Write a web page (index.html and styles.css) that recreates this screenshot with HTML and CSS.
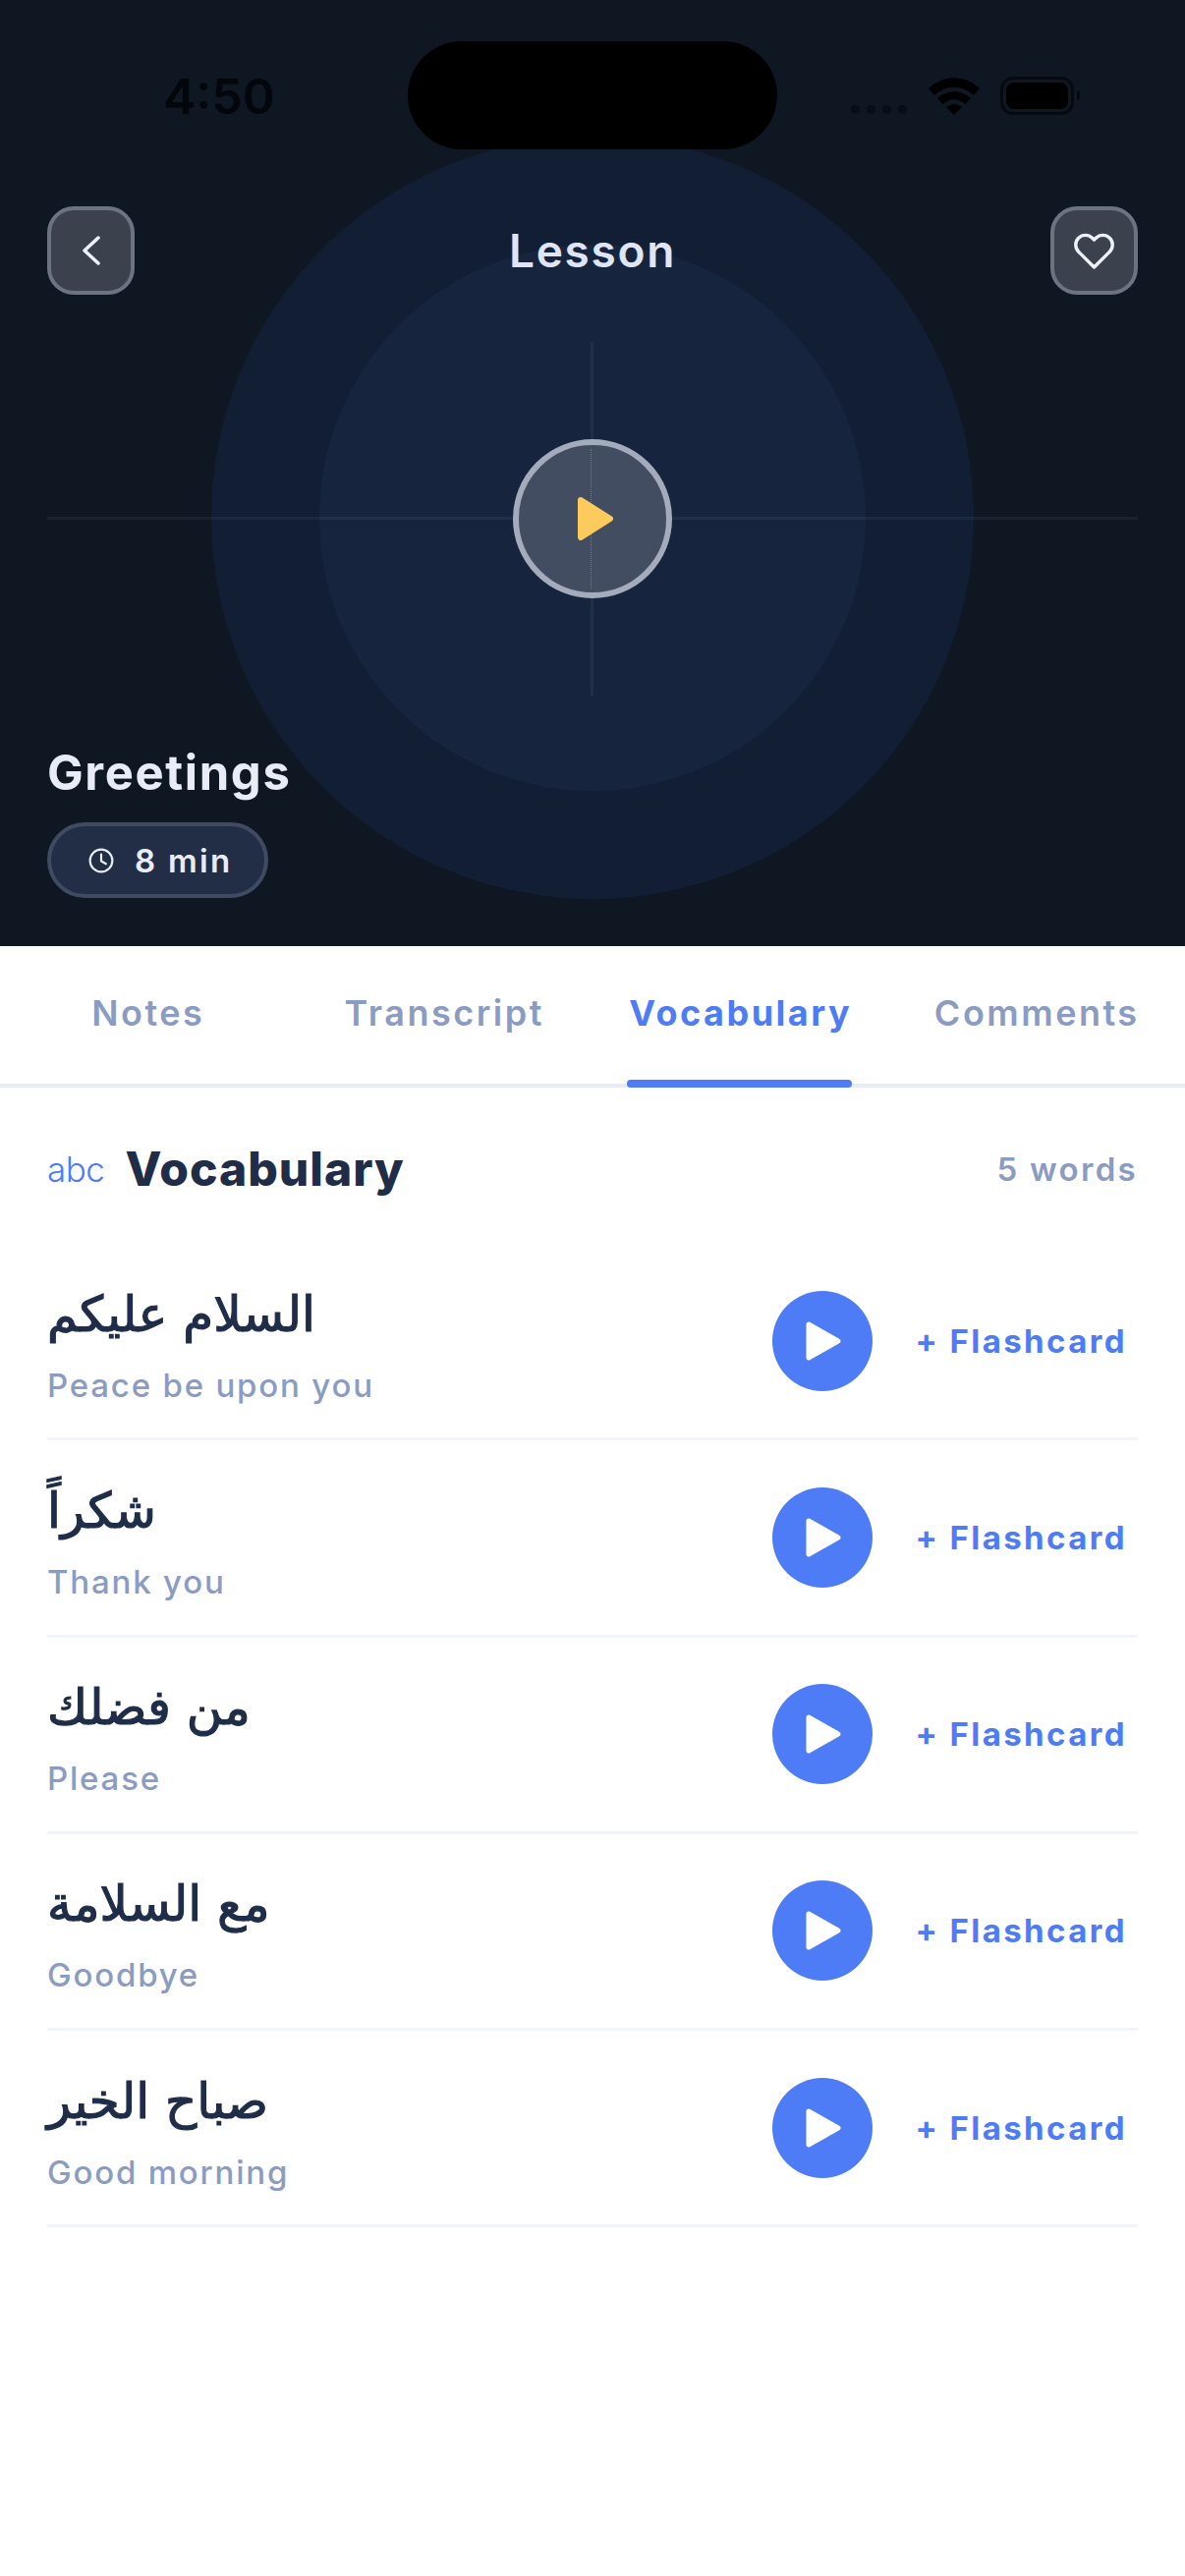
FILE: index.html
```html
<!DOCTYPE html>
<html lang="en">
<head>
<meta charset="utf-8">
<title>Lesson</title>
<link rel="stylesheet" href="styles.css">
</head>
<body>
<div class="app">
  <section class="hero">
    <div class="ring ring-outer"></div>
    <div class="ring ring-inner"></div>
    <div class="axis axis-h"></div>
    <div class="axis axis-v"></div>
    <div class="big-play">
      <svg class="big-play-icon" viewBox="0 0 36 44"><path d="M3 3 L33 22 L3 41 Z"/></svg>
    </div>
    <div class="island"></div>

    <div class="status">
      <span class="time">4:50</span>
      <div class="status-right">
        <div class="dots"><i></i><i></i><i></i><i></i></div>
        <svg class="wifi" viewBox="0 0 52 38"><path d="M0 11 C15 -3.500 37 -3.500 52 11 L46 18 C34 7 18 7 6 18 Z"/><path d="M9 21 C19 12 33 12 43 21 L37.500 27 C30 20.500 22 20.500 14.500 27 Z"/><path d="M18 30 C23 26 29 26 34 30 L26 38 Z"/></svg>
        <div class="battery"><div class="battery-fill"></div></div>
        <div class="battery-nub"></div>
      </div>
    </div>

    <header class="nav">
      <button class="nav-btn">
        <svg class="chev" viewBox="0 0 20 30"><path d="M17 2 L3 15 L17 28"/></svg>
      </button>
      <h1 class="nav-title">Lesson</h1>
      <button class="nav-btn">
        <svg class="heart" viewBox="0 0 24 24"><path d="M20.840 4.610a5.500 5.500 0 0 0-7.780 0L12 5.670l-1.060-1.060a5.500 5.500 0 0 0-7.780 7.780l1.060 1.060L12 21.230l7.780-7.780 1.060-1.060a5.500 5.500 0 0 0 0-7.780z"/></svg>
      </button>
    </header>

    <div class="hero-info">
      <h2 class="lesson-name">Greetings</h2>
      <div class="pill">
        <svg class="clock" viewBox="0 0 24 24"><circle cx="12" cy="12" r="10.500"/><path d="M12 6v6.500l4.500 2.500"/></svg>
        <span>8 min</span>
      </div>
    </div>
  </section>

  <nav class="tabs">
    <div class="tab"><span class="tab-label">Notes</span></div>
    <div class="tab"><span class="tab-label">Transcript</span></div>
    <div class="tab tab-active"><span class="tab-label">Vocabulary</span></div>
    <div class="tab"><span class="tab-label">Comments</span></div>
  </nav>

  <main class="content">
    <div class="section-head">
      <span class="abc">abc</span>
      <h3 class="section-title">Vocabulary</h3>
      <span class="count">5 words</span>
    </div>

    <div class="row">
      <div class="word"><div class="ar" dir="rtl">السلام عليكم</div><div class="en">Peace be upon you</div></div>
      <button class="say"><svg viewBox="0 0 36 40"><path d="M3 3 L33 20 L3 37 Z"/></svg></button>
      <span class="flash">+ Flashcard</span>
    </div>
    <div class="row">
      <div class="word"><div class="ar" dir="rtl">شكراً</div><div class="en">Thank you</div></div>
      <button class="say"><svg viewBox="0 0 36 40"><path d="M3 3 L33 20 L3 37 Z"/></svg></button>
      <span class="flash">+ Flashcard</span>
    </div>
    <div class="row">
      <div class="word"><div class="ar" dir="rtl">من فضلك</div><div class="en">Please</div></div>
      <button class="say"><svg viewBox="0 0 36 40"><path d="M3 3 L33 20 L3 37 Z"/></svg></button>
      <span class="flash">+ Flashcard</span>
    </div>
    <div class="row">
      <div class="word"><div class="ar" dir="rtl">مع السلامة</div><div class="en">Goodbye</div></div>
      <button class="say"><svg viewBox="0 0 36 40"><path d="M3 3 L33 20 L3 37 Z"/></svg></button>
      <span class="flash">+ Flashcard</span>
    </div>
    <div class="row">
      <div class="word"><div class="ar" dir="rtl">صباح الخير</div><div class="en">Good morning</div></div>
      <button class="say"><svg viewBox="0 0 36 40"><path d="M3 3 L33 20 L3 37 Z"/></svg></button>
      <span class="flash">+ Flashcard</span>
    </div>
  </main>
</div>
</body>
</html>
```
FILE: styles.css
```css
* { box-sizing: border-box; }
html, body { margin: 0; padding: 0; background: #fff; }
body { font-family: Inter, "DejaVu Sans", sans-serif; }
.app { width: 1206px; height: 2622px; overflow: hidden; background: #fff; }

.hero {
  position: relative;
  height: 963px;
  background: #0f1723;
  overflow: hidden;
  padding: 0 48px 49px;
  display: flex;
  flex-direction: column;
}
.ring { position: absolute; border-radius: 50%; left: 50%; top: 527px; transform: translate(-50%, -50%); }
.ring-outer { width: 776px; height: 776px; background: #121e34; }
.ring-inner { width: 556px; height: 556px; background: #16243e; }
.axis { position: absolute; background: rgba(255, 255, 255, 0.05); }
.axis-h { left: 48px; right: 48px; top: 526px; height: 3px; }
.axis-v { left: 601px; top: 348px; width: 3px; height: 360px; }
.big-play {
  position: absolute;
  left: 522px;
  top: 447px;
  width: 162px;
  height: 162px;
  border-radius: 50%;
  border: 6px solid #a3abbd;
  background: #434d62;
  display: flex;
  align-items: center;
  justify-content: center;
}
.big-play::before {
  content: "";
  position: absolute;
  left: 73px;
  top: 4px;
  bottom: 4px;
  border-left: 1px dotted #6d768a;
}
.big-play-icon { position: relative; width: 36px; height: 44px; margin-left: 6px; }
.big-play-icon path { fill: #fdcb5c; stroke: #fdcb5c; stroke-width: 6; stroke-linejoin: round; }
.island {
  position: absolute;
  left: 415px;
  top: 42px;
  width: 376px;
  height: 110px;
  border-radius: 55px;
  background: #000;
}

.status {
  position: relative;
  height: 210px;
  padding: 67px 59px 0 118px;
  display: flex;
  justify-content: space-between;
  align-items: flex-start;
}
.time { font-size: 50px; line-height: 62px; font-weight: 600; color: #03060a; }
.status-right { display: flex; align-items: flex-start; padding-top: 11px; }
.dots { display: flex; gap: 7px; margin-top: 29px; margin-right: 22px; }
.dots i { display: block; width: 9px; height: 9px; border-radius: 50%; background: #080e16; }
.wifi { width: 52px; height: 38px; fill: #000; margin-top: 1px; margin-right: 21px; }
.battery {
  width: 75px;
  height: 39px;
  border: 3px solid #060a10;
  border-radius: 13px;
  padding: 3px;
}
.battery-fill { width: 100%; height: 100%; background: #000; border-radius: 8px; }
.battery-nub { width: 3px; height: 10px; margin: 14px 0 0 3px; background: #060a10; border-radius: 0 3px 3px 0; }

.nav {
  position: relative;
  display: flex;
  align-items: center;
  justify-content: space-between;
  height: 90px;
}
.nav-btn {
  width: 89px;
  height: 90px;
  padding: 0;
  border: 4px solid #6c7482;
  border-radius: 27px;
  background: #3b424e;
  display: flex;
  align-items: center;
  justify-content: center;
}
.chev { width: 20px; height: 30px; fill: none; stroke: #eef1f9; stroke-width: 3.500; stroke-linecap: round; stroke-linejoin: round; }
.heart { width: 43px; height: 43px; fill: none; stroke: #eef1f9; stroke-width: 1.900; stroke-linecap: round; stroke-linejoin: round; }
.nav-title {
  margin: 0;
  font-size: 46px;
  line-height: 54px;
  font-weight: 600;
  letter-spacing: 1.700px;
  color: #dfe5f5;
}

.hero-info { position: relative; margin-top: auto; }
.lesson-name {
  margin: 0 0 21px;
  font-size: 49px;
  line-height: 58px;
  font-weight: 700;
  letter-spacing: 1.600px;
  color: #e8ecf7;
}
.pill {
  display: inline-flex;
  align-items: center;
  height: 77px;
  padding: 0 33px 0 38px;
  gap: 21px;
  border: 4px solid #3f4b63;
  border-radius: 39px;
  background: #222e45;
  font-size: 33px;
  font-weight: 600;
  letter-spacing: 2.300px;
  color: #e8ecf7;
}
.clock { width: 26px; height: 26px; fill: none; stroke: #e8ecf7; stroke-width: 2; stroke-linecap: round; stroke-linejoin: round; }

.tabs {
  display: grid;
  grid-template-columns: repeat(4, 1fr);
  height: 144px;
  border-bottom: 4px solid #e8ecf7;
}
.tab { display: flex; justify-content: center; }
.tab-label {
  position: relative;
  height: 140px;
  padding-top: 47px;
  font-size: 36px;
  line-height: 42px;
  font-weight: 600;
  letter-spacing: 2.500px;
  color: #8b9cc3;
}
.tab-active .tab-label { color: #4d7cf6; font-weight: 700; }
.tab-active .tab-label::after {
  content: "";
  position: absolute;
  left: -2px;
  right: 0;
  bottom: -4px;
  height: 8px;
  border-radius: 4px;
  background: #4d7cf6;
}

.content { padding: 0 48px; }
.section-head {
  display: flex;
  align-items: center;
  height: 159px;
  padding-top: 6px;
}
.abc { font-size: 35px; font-weight: 300; letter-spacing: -0.500px; color: #4d7cf6; margin-right: 21px; }
.section-title { margin: 0; font-size: 48px; font-weight: 800; letter-spacing: 1px; color: #1f2d48; }
.count { margin-left: auto; font-size: 33px; font-weight: 600; letter-spacing: 2.300px; color: #8b9cc3; }

.row {
  display: flex;
  align-items: center;
  height: 200.250px;
  border-bottom: 3px solid #f1f4fc;
}
.word { flex: 1; display: flex; flex-direction: column; align-items: flex-start; padding-top: 6px; }
.ar { font-family: "DejaVu Sans", sans-serif; font-size: 50px; line-height: 66px; font-weight: 400; -webkit-text-stroke: 1.200px #1f2d48; color: #1f2d48; }
.en { margin-top: 18px; font-size: 33px; line-height: 42px; font-weight: 500; letter-spacing: 1.800px; color: #8b9cc3; }
.say {
  width: 102px;
  height: 102px;
  padding: 0;
  border: 0;
  border-radius: 50%;
  background: #4d7cf6;
  display: flex;
  align-items: center;
  justify-content: center;
}
.say svg { width: 36px; height: 40px; margin-left: 3px; }
.say path { fill: #fff; stroke: #fff; stroke-width: 5; stroke-linejoin: round; }
.flash {
  margin-left: 44px;
  margin-right: 11px;
  font-size: 33px;
  font-weight: 700;
  letter-spacing: 2.400px;
  color: #4d7cf6;
  white-space: nowrap;
}
```
